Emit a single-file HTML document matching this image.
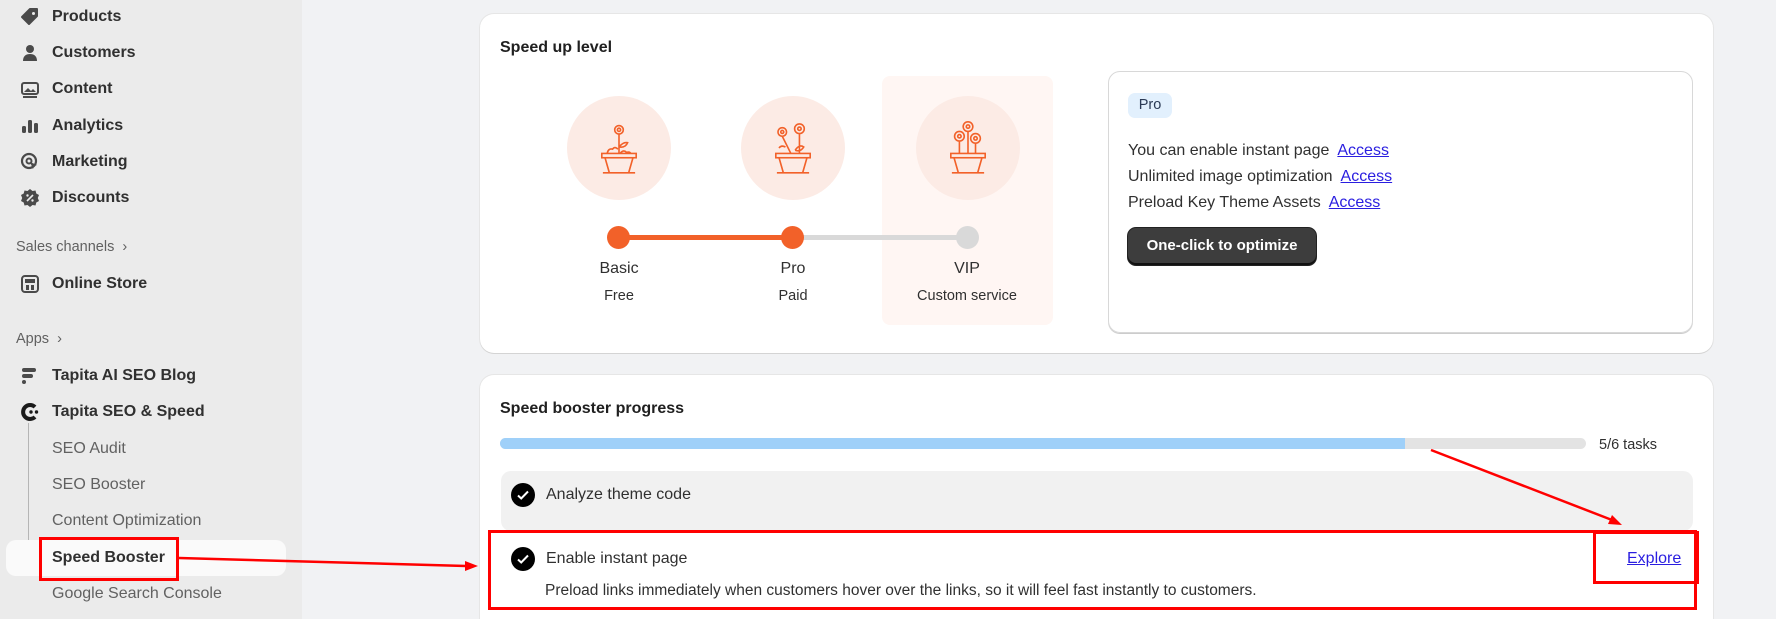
<!DOCTYPE html>
<html style="overflow:hidden;width:1776px;height:619px"><head><meta charset="utf-8"><style>
*{margin:0;padding:0;box-sizing:border-box}
body{width:1776px;height:619px;overflow:hidden;background:#f1f2f4;font-family:"Liberation Sans",sans-serif;position:relative;color:#303030}
.sb{position:absolute;left:0;top:0;width:302px;height:619px;background:#ebebeb}
.a{position:absolute;white-space:nowrap}
.nav{left:52px;font-size:16px;font-weight:bold;color:#303030;line-height:20px}
.sub{left:52px;font-size:16px;color:#616161;line-height:20px}
.sec{left:16px;font-size:14.5px;color:#616161;line-height:20px}
.ic{position:absolute;left:20px}
.card{position:absolute;background:#fff;border-radius:14px;box-shadow:0 1px 0 #d4d4d4,0 0 0 1px #e6e6e6}
.c{font-size:15px;color:#303030}
.lab{position:absolute;text-align:center;width:160px}
.circ{position:absolute;width:104px;height:104px;border-radius:50%;background:#fcebe5}
a{color:#2a1ee0;text-decoration:underline}
</style></head><body>
<div class="sb"></div>
<svg class="ic" style="top:7px" width="20" height="20" viewBox="0 0 20 20"><path d="M10 2h7v7l-8 8-7-7z" fill="#4a4a4a" stroke="#4a4a4a" stroke-linejoin="round" stroke-width="2"/><circle cx="13.5" cy="6.5" r="1.5" fill="#ebebeb"/></svg>
<svg class="ic" style="top:43px" width="20" height="20" viewBox="0 0 20 20"><circle cx="10" cy="6" r="4" fill="#4a4a4a"/><path d="M3 18c0-5 3-7 7-7s7 2 7 7z" fill="#4a4a4a"/></svg>
<svg class="ic" style="top:80px" width="20" height="20" viewBox="0 0 20 20"><rect x="2" y="3" width="16" height="11" rx="2" fill="none" stroke="#4a4a4a" stroke-width="2"/><path d="M4 12l4-4 3 3 2-2 3 3z" fill="#4a4a4a"/><rect x="3" y="16" width="14" height="2" fill="#4a4a4a"/></svg>
<svg class="ic" style="top:116px" width="20" height="20" viewBox="0 0 20 20"><rect x="2" y="10" width="4" height="7" rx="1.5" fill="#4a4a4a"/><rect x="8" y="4" width="4" height="13" rx="1.5" fill="#4a4a4a"/><rect x="14" y="7" width="4" height="10" rx="1.5" fill="#4a4a4a"/></svg>
<svg class="ic" style="top:152px" width="20" height="20" viewBox="0 0 20 20"><circle cx="9" cy="9" r="7" fill="none" stroke="#4a4a4a" stroke-width="2.2"/><circle cx="9" cy="9" r="2.5" fill="none" stroke="#4a4a4a" stroke-width="2"/><path d="M10 10l7 3-3 1-1 3z" fill="#4a4a4a"/></svg>
<svg class="ic" style="top:188px" width="20" height="20" viewBox="0 0 20 20"><path d="M10 1l2.5 2 3-.5.8 3 2.7 1.5-1.2 3 1.2 3-2.7 1.5-.8 3-3-.5L10 19l-2.5-2-3 .5-.8-3L1 13l1.2-3L1 7l2.7-1.5.8-3 3 .5z" fill="#4a4a4a"/><path d="M7 13l6-6" stroke="#ebebeb" stroke-width="1.6"/><circle cx="7.5" cy="7.5" r="1.2" fill="#ebebeb"/><circle cx="12.5" cy="12.5" r="1.2" fill="#ebebeb"/></svg>
<svg class="ic" style="top:274px" width="20" height="20" viewBox="0 0 20 20"><rect x="2" y="2" width="16" height="16" rx="3" fill="none" stroke="#4a4a4a" stroke-width="2"/><rect x="5" y="5" width="10" height="4" fill="#4a4a4a"/><rect x="6" y="11" width="3" height="5" fill="#4a4a4a"/><rect x="11" y="11" width="3" height="5" fill="#4a4a4a"/></svg>
<svg class="ic" style="top:366px" width="20" height="20" viewBox="0 0 20 20"><rect x="2" y="2" width="14" height="4" rx="2" fill="#4a4a4a"/><rect x="2" y="8" width="11" height="4" rx="2" fill="#4a4a4a"/><circle cx="4" cy="16" r="2" fill="#4a4a4a"/></svg>
<svg class="ic" style="top:402px" width="20" height="20" viewBox="0 0 20 20"><path d="M15 5A7 7 0 1 0 15 15" fill="none" stroke="#1a1a1a" stroke-width="4"/><circle cx="11" cy="10" r="1.7" fill="#1a1a1a"/><circle cx="16.5" cy="10" r="1.7" fill="#1a1a1a"/></svg>
<div class="a" style="left:28px;top:423px;width:10px;height:132px;border-left:1.5px solid #b5b5b5;border-bottom:1.5px solid #b5b5b5;border-bottom-left-radius:4px"></div>
<div class="a" style="left:6px;top:540px;width:280px;height:36px;background:#fafafa;border-radius:10px"></div>
<div class="a nav" style="top:7px">Products</div>
<div class="a nav" style="top:43px">Customers</div>
<div class="a nav" style="top:79px">Content</div>
<div class="a nav" style="top:116px">Analytics</div>
<div class="a nav" style="top:152px">Marketing</div>
<div class="a nav" style="top:188px">Discounts</div>
<div class="a sec" style="top:237px">Sales channels &nbsp;›</div>
<div class="a nav" style="top:274px">Online Store</div>
<div class="a sec" style="top:329px">Apps &nbsp;›</div>
<div class="a nav" style="top:366px">Tapita AI SEO Blog</div>
<div class="a nav" style="top:402px">Tapita SEO &amp; Speed</div>
<div class="a sub" style="top:439px">SEO Audit</div>
<div class="a sub" style="top:475px">SEO Booster</div>
<div class="a sub" style="top:511px">Content Optimization</div>
<div class="a nav" style="top:548px">Speed Booster</div>
<div class="a sub" style="top:584px">Google Search Console</div>

<div class="card" style="left:480px;top:14px;width:1233px;height:339px"></div>
<div class="a" style="left:500px;top:39px;font-size:16px;font-weight:bold;color:#202020">Speed up level</div>
<div class="a" style="left:882px;top:76px;width:171px;height:249px;background:#fff6f3;border-radius:8px"></div>
<div class="circ" style="left:567px;top:96px"></div>
<div class="circ" style="left:741px;top:96px"></div>
<div class="circ" style="left:916px;top:96px"></div>
<svg class="a" style="left:596px;top:118px" width="46" height="58" viewBox="0 0 42 54" fill="none" stroke="#f26129" stroke-width="1.5">
<circle cx="21" cy="11" r="4"/><circle cx="21" cy="11" r="1.5"/><path d="M21 15v18M21 27q4-5 8-4-2 5-8 4"/><path d="M10 33q1-5 5-4 2-3 5 0M22 33q3-4 6-1 3-1 4 1"/><rect x="5" y="33" width="32" height="4"/><path d="M8 37l4 14h18l4-14M6 51h30"/></svg>
<svg class="a" style="left:770px;top:118px" width="46" height="58" viewBox="0 0 42 54" fill="none" stroke="#f26129" stroke-width="1.5">
<circle cx="27" cy="10" r="4.5"/><circle cx="27" cy="10" r="1.6"/><circle cx="11" cy="13" r="4"/><circle cx="11" cy="13" r="1.4"/><path d="M27 15v18M11 17l8 16M23 30q4-6 8-3-3 5-8 3M14 27q-4-2-6 1"/><rect x="5" y="33" width="32" height="4"/><path d="M8 37l4 14h18l4-14M6 51h30"/></svg>
<svg class="a" style="left:945px;top:118px" width="46" height="58" viewBox="0 0 42 54" fill="none" stroke="#f26129" stroke-width="1.5">
<circle cx="21" cy="8" r="4.5"/><circle cx="21" cy="8" r="1.6"/><circle cx="13" cy="17" r="4.5"/><circle cx="13" cy="17" r="1.6"/><circle cx="28" cy="19" r="4.5"/><circle cx="28" cy="19" r="1.6"/><path d="M13 22v11M28 24v9M21 13v20"/><rect x="5" y="33" width="32" height="4"/><path d="M8 37l4 14h18l4-14M6 51h30"/></svg>
<div class="a" style="left:618px;top:235px;width:175px;height:5px;background:#f26129"></div>
<div class="a" style="left:793px;top:235px;width:174px;height:5px;background:#d9d9d9"></div>
<div class="a" style="left:607px;top:226px;width:23px;height:23px;border-radius:50%;background:#f26129"></div>
<div class="a" style="left:781px;top:226px;width:23px;height:23px;border-radius:50%;background:#f26129"></div>
<div class="a" style="left:956px;top:226px;width:23px;height:23px;border-radius:50%;background:#d9d9d9"></div>
<div class="lab c" style="left:539px;top:260px;font-size:16px">Basic</div>
<div class="lab c" style="left:539px;top:288px;font-size:14.5px">Free</div>
<div class="lab c" style="left:713px;top:260px;font-size:16px">Pro</div>
<div class="lab c" style="left:713px;top:288px;font-size:14.5px">Paid</div>
<div class="lab c" style="left:887px;top:260px;font-size:16px">VIP</div>
<div class="lab c" style="left:887px;top:288px;font-size:14.5px">Custom service</div>
<div class="a" style="left:1108px;top:71px;width:585px;height:262px;border:1px solid #d8d8d8;border-radius:12px;box-shadow:0 1px 0 #ccc"></div>
<div class="a" style="left:1128px;top:93px;width:44px;height:25px;background:#e2f0fd;border-radius:7px;font-size:14.5px;color:#2b3a55;text-align:center;line-height:25px">Pro</div>
<div class="a c" style="left:1128px;top:142px;font-size:16px">You can enable instant page&nbsp; <a>Access</a></div>
<div class="a c" style="left:1128px;top:168px;font-size:16px">Unlimited image optimization&nbsp; <a>Access</a></div>
<div class="a c" style="left:1128px;top:194px;font-size:16px">Preload Key Theme Assets&nbsp; <a>Access</a></div>
<div class="a" style="left:1128px;top:228px;width:188px;height:37px;background:#3d3d3d;border-radius:8px;color:#fff;font-weight:bold;font-size:15px;text-align:center;line-height:35px;box-shadow:inset 0 -2px 0 #111,0 0 0 1px #222">One-click to optimize</div>

<div class="card" style="left:480px;top:375px;width:1233px;height:244px;border-radius:14px 14px 0 0"></div>
<div class="a" style="left:500px;top:400px;font-size:16px;font-weight:bold;color:#202020">Speed booster progress</div>
<div class="a" style="left:500px;top:438px;width:1086px;height:11px;background:#e3e3e3;border-radius:6px"></div>
<div class="a" style="left:500px;top:438px;width:905px;height:11px;background:#9fd0f9;border-radius:6px 0 0 6px"></div>
<div class="a c" style="left:1599px;top:437px;font-size:14.5px">5/6 tasks</div>
<div class="a" style="left:501px;top:471px;width:1192px;height:60px;background:#f1f1f1;border-radius:10px"></div>
<svg class="a" style="left:511px;top:483px" width="24" height="24" viewBox="0 0 24 24"><circle cx="12" cy="12" r="12" fill="#000"/><path d="M7 12.5l3.2 3L17 8.5" fill="none" stroke="#fff" stroke-width="2"/></svg>
<div class="a c" style="left:546px;top:486px;font-size:16px">Analyze theme code</div>
<svg class="a" style="left:511px;top:547px" width="24" height="24" viewBox="0 0 24 24"><circle cx="12" cy="12" r="12" fill="#000"/><path d="M7 12.5l3.2 3L17 8.5" fill="none" stroke="#fff" stroke-width="2"/></svg>
<div class="a c" style="left:546px;top:550px;font-size:16px">Enable instant page</div>
<div class="a c" style="left:545px;top:582px;font-size:15.5px">Preload links immediately when customers hover over the links, so it will feel fast instantly to customers.</div>
<div class="a" style="left:1627px;top:550px;font-size:16px"><a>Explore</a></div>

<div class="a" style="left:488px;top:530px;width:1209px;height:80px;border:3px solid #f00"></div>
<div class="a" style="left:1593px;top:531px;width:106px;height:53px;border:3px solid #f00"></div>
<div class="a" style="left:39px;top:537px;width:140px;height:44px;border:3px solid #f00"></div>
<svg class="a" style="left:0;top:0" width="1776" height="619">
<line x1="179" y1="558" x2="466" y2="566" stroke="#f00" stroke-width="2.5"/>
<path d="M478 566l-13 -5v10z" fill="#f00"/>
<line x1="1431" y1="450" x2="1612" y2="520" stroke="#f00" stroke-width="2.5"/>
<path d="M1622 525l-10 -10-4 9z" fill="#f00"/>
</svg>
</body></html>
